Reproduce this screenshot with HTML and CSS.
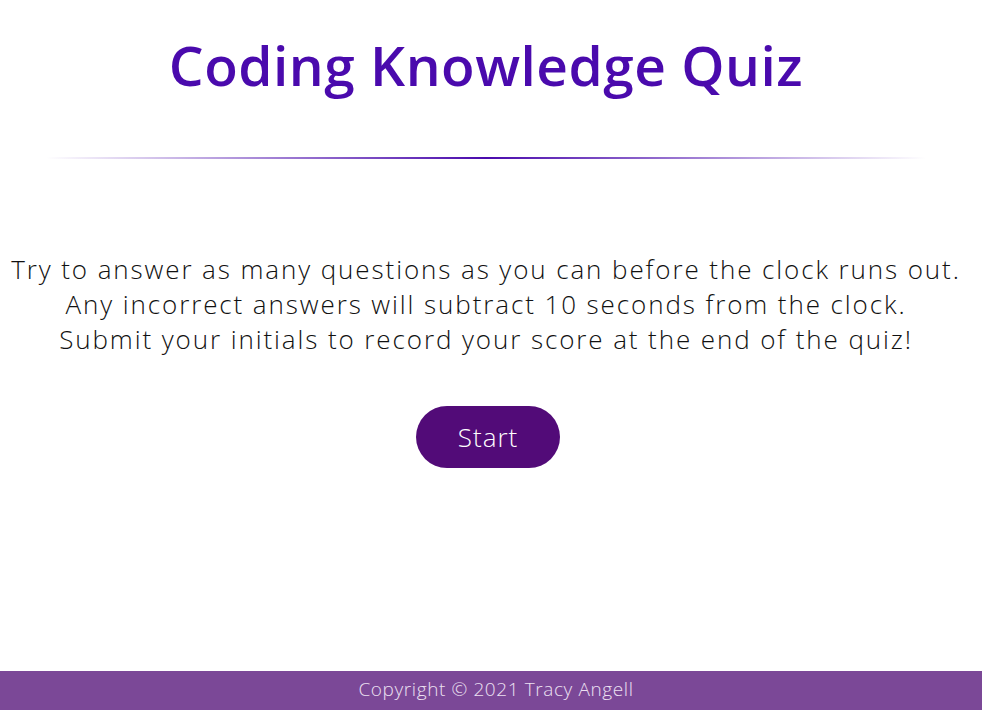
FILE: index.html
```html
<!DOCTYPE html>
<html lang="en">
<head>
<meta charset="utf-8">
<title>Coding Knowledge Quiz</title>
<link rel="stylesheet" href="styles.css">
</head>
<body>
<div class="page">
  <header class="header">
    <h1 class="title">Coding Knowledge Quiz</h1>
    <hr class="rule">
  </header>
  <main class="main">
    <p class="intro">Try to answer as many questions as you can before the clock runs out.<br>Any incorrect answers will subtract 10 seconds from the clock.<br>Submit your initials to record your score at the end of the quiz!</p>
    <button class="start" type="button">Start</button>
  </main>
  <footer class="footer">Copyright © 2021 Tracy Angell</footer>
</div>
</body>
</html>
```
FILE: styles.css
```css
html, body {
  margin: 0;
  padding: 0;
  height: 100%;
  background: #ffffff;
}
body {
  font-family: "Open Sans", "DejaVu Sans", sans-serif;
}
.page {
  min-height: 100%;
  display: flex;
  flex-direction: column;
}
.header {
  display: flex;
  flex-direction: column;
  align-items: center;
  padding-top: 30px;
  padding-right: 10px;
}
.title {
  margin: 0;
  font-size: 55px;
  line-height: 70px;
  font-weight: 600;
  color: #4a0aad;
  letter-spacing: 0.5px;
}
.rule {
  width: 880px;
  height: 2px;
  border: 0;
  margin: 57px 0 0 0;
  background: linear-gradient(to right, rgba(74,10,173,0), #4a0aad 50%, rgba(74,10,173,0));
}
.main {
  flex: 1;
  display: flex;
  flex-direction: column;
  align-items: center;
  padding-top: 93px;
  padding-right: 10px;
}
.intro {
  margin: 0;
  text-align: center;
  font-size: 26px;
  line-height: 35px;
  font-weight: 300;
  letter-spacing: 1.9px;
  color: #111111;
  white-space: nowrap;
}
.start {
  margin-top: 49px;
  margin-left: 4px;
  width: 144px;
  height: 62px;
  border: 0;
  border-radius: 31px;
  background: #520b78;
  color: #ffffff;
  font-family: "Open Sans", "DejaVu Sans", sans-serif;
  font-weight: 300;
  font-size: 26px;
  letter-spacing: 1px;
  cursor: pointer;
}
.footer {
  height: 39px;
  line-height: 37px;
  padding-left: 10px;
  background: #7b4897;
  color: #ece0f2;
  text-align: center;
  font-size: 19px;
  font-weight: 300;
  letter-spacing: 0.6px;
}
```
